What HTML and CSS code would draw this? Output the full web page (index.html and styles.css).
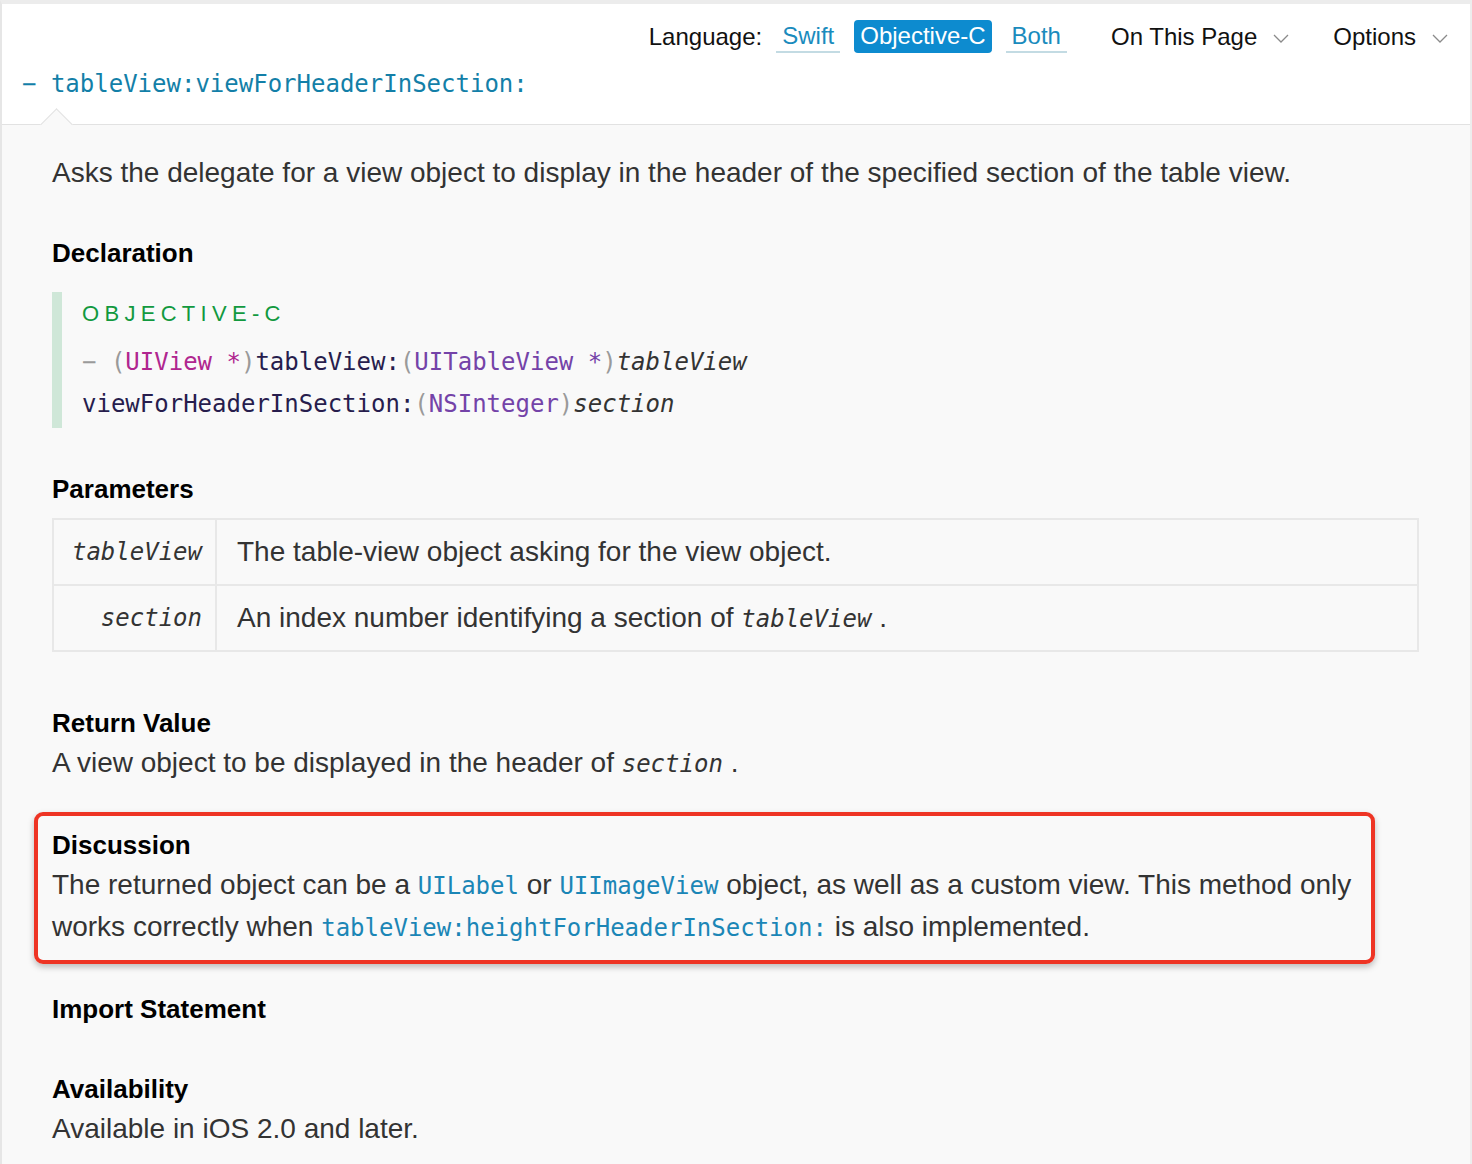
FILE: index.html
```html
<html>
    <head>
        <title>tableView:viewForHeaderInSection:</title>
        <link rel="stylesheet" href="styles.css">
    </head>
    <body>
        <div id="page">
            <div id="header">
                <div class="langBar">
                    <span class="langLabel">Language:</span>
                    <a class="langLink">Swift</a>
                    <a class="langLink current">Objective-C</a>
                    <a class="langLink">Both</a>
                    <span class="menu">On This Page
                        <svg class="chevron" width="16" height="9" viewBox="0 0 16 9"><path d="M1 1 L8 8 L15 1" fill="none" stroke="#8a8a8a" stroke-width="1.3"/></svg>
                    </span>
                    <span class="menu">Options
                        <svg class="chevron" width="16" height="9" viewBox="0 0 16 9"><path d="M1 1 L8 8 L15 1" fill="none" stroke="#8a8a8a" stroke-width="1.3"/></svg>
                    </span>
                </div>
                <div class="methodTitle">&minus; tableView:viewForHeaderInSection:</div>
                <div class="notch"></div>
            </div>

            <div id="content">
                <p class="abstract">Asks the delegate for a view object to display in the header of the specified section of the table view.</p>

                <h3 class="decl">Declaration</h3>
                <div class="codeBlock">
                    <div class="codeLang">OBJECTIVE-C</div>
                    <div class="codeLine"><span class="punct">&minus; (</span><span class="typeA">UIView *</span><span class="punct">)</span><span class="sel">tableView:</span><span class="punct">(</span><span class="typeB">UITableView *</span><span class="punct">)</span><span class="arg">tableView</span></div>
                    <div class="codeLine"><span class="sel">viewForHeaderInSection:</span><span class="punct">(</span><span class="typeB">NSInteger</span><span class="punct">)</span><span class="arg">section</span></div>
                </div>

                <h3 class="params">Parameters</h3>
                <table class="paramTable">
                    <tr>
                        <td class="paramName">tableView</td>
                        <td class="paramDesc">The table-view object asking for the view object.</td>
                    </tr>
                    <tr>
                        <td class="paramName">section</td>
                        <td class="paramDesc">An index number identifying a section of <code class="argRef">tableView</code> .</td>
                    </tr>
                </table>

                <h3 class="retval">Return Value</h3>
                <p class="text">A view object to be displayed in the header of <code class="argRef">section</code> .</p>

                <div class="highlight">
                    <h3>Discussion</h3>
                    <p class="text">The returned object can be a <code class="link">UILabel</code> or <code class="link">UIImageView</code> object, as well as a custom view. This method only works correctly when <code class="link">tableView:heightForHeaderInSection:</code> is also implemented.</p>
                </div>

                <h3 class="importHead">Import Statement</h3>

                <h3 class="availHead">Availability</h3>
                <p class="text">Available in iOS 2.0 and later.</p>
            </div>
        </div>
    </body>
</html>
```

FILE: styles.css
```css
body{
    margin: 0;
    background: #f9f9f9;
    font-family: "Liberation Sans", Arial, sans-serif;
    color: #333;
}
#page{
    min-height: 1160px;
    border-top: 4px solid #ececec;
    border-left: 2px solid #e6e6e6;
    border-right: 2px solid #ededed;
}
#header{
    position: relative;
    height: 120px;
    background: #fff;
    border-bottom: 1px solid #e2e2e2;
}
.langBar{
    display: flex;
    align-items: center;
    justify-content: flex-end;
    padding: 16px 22px 0 0;
    height: 33px;
    font-size: 24px;
    color: #111;
}
.langLabel{
    margin-right: 14px;
}
.langLink{
    color: #1a8bbd;
    padding: 0 6px;
    line-height: 31px;
    border-bottom: 2px solid #c3dbe3;
    margin-right: 14px;
}
.langLink:nth-of-type(3){
    margin-right: 0;
}
.langLink.current{
    background: #0d8bcf;
    color: #fff;
    border-radius: 4px;
    border-bottom: 2px solid #0d8bcf;
}
.menu{
    display: flex;
    align-items: center;
    margin-left: 44px;
}
.chevron{
    margin-left: 16px;
    margin-top: 4px;
}
.methodTitle{
    font-family: "DejaVu Sans Mono", monospace;
    font-size: 24px;
    color: #137fa8;
    padding: 16px 0 0 20px;
    line-height: 30px;
}
.notch{
    position: absolute;
    left: 43px;
    bottom: -12px;
    width: 22px;
    height: 22px;
    background: #f9f9f9;
    border-top: 1px solid #e2e2e2;
    border-left: 1px solid #e2e2e2;
    transform: rotate(45deg);
}
#content{
    padding: 0 51px 0 50px;
}
p{
    margin: 0;
}
h3{
    margin: 0;
    font-size: 26px;
    line-height: 40px;
    color: #000;
}
.abstract{
    font-size: 28px;
    line-height: 40px;
    margin-top: 28px;
}
.text{
    font-size: 28px;
    line-height: 40px;
}
.decl{
    margin-top: 40px;
}
.codeBlock{
    margin-top: 19px;
    border-left: 10px solid #cfe7d8;
    padding: 0 0 3px 20px;
}
.codeLang{
    font-size: 22px;
    letter-spacing: 5.3px;
    color: #12993f;
    line-height: 44px;
    padding-bottom: 5px;
}
.codeLine{
    font-family: "DejaVu Sans Mono", monospace;
    font-size: 24px;
    line-height: 42px;
    color: #271d4d;
}
.punct{ color: #9a9a9a; }
.typeA{ color: #b0268f; }
.typeB{ color: #7443a8; }
.sel{ color: #271d4d; }
.arg{ color: #333; font-style: italic; }
.params{
    margin-top: 41px;
}
.paramTable{
    margin-top: 9px;
    width: 100%;
    border-collapse: collapse;
}
.paramTable td{
    border: 2px solid #e8e8e8;
    height: 66px;
    padding: 0;
}
.paramName{
    width: 148px;
    text-align: right;
    padding-right: 13px !important;
    font-family: "DejaVu Sans Mono", monospace;
    font-style: italic;
    font-size: 24px;
    color: #333;
}
.paramDesc{
    padding-left: 20px !important;
    font-size: 28px;
}
code{
    font-family: "DejaVu Sans Mono", monospace;
    font-size: 24px;
    line-height: 1;
}
.argRef{
    font-style: italic;
}
.link{
    color: #1b86b6;
}
.retval{
    margin-top: 51px;
}
.highlight{
    margin: 29px 0 0 -18px;
    width: 1341px;
    box-sizing: border-box;
    border: 4px solid #ee3424;
    border-radius: 9px;
    padding: 10px 14px 12px 14px;
    box-shadow: 0 3px 6px rgba(0,0,0,0.25);
}
.highlight .text{
    line-height: 42px;
}
.highlight h3{
    line-height: 38px;
}
.importHead{
    margin-top: 25px;
}
.availHead{
    margin-top: 40px;
}
```
